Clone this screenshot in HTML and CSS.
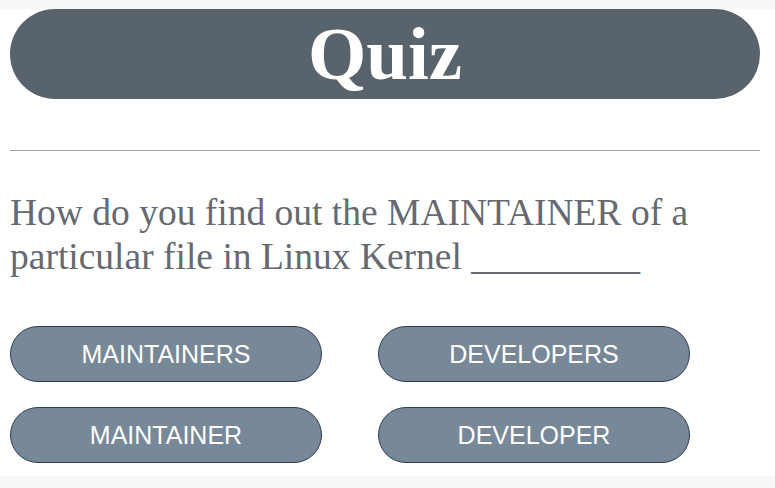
FILE: index.html
```html
<!DOCTYPE html>
<html lang="en">
<head>
<meta charset="utf-8">
<title>Quiz</title>
<link rel="stylesheet" href="styles.css">
</head>
<body>
<main class="quiz">
  <header class="quiz-header"><h1 class="quiz-title">Quiz</h1></header>
  <hr class="divider">
  <p class="question">How do you find out the MAINTAINER of a particular file in Linux Kernel _________</p>
  <div class="answers">
    <button class="answer">MAINTAINERS</button>
    <button class="answer">DEVELOPERS</button>
    <button class="answer">MAINTAINER</button>
    <button class="answer">DEVELOPER</button>
  </div>
</main>
</body>
</html>
```
FILE: styles.css
```css
html, body {
  margin: 0;
  padding: 0;
  background: #f7f8f8;
}
.quiz {
  margin-top: 9px;
  padding: 0 15px 13px 10px;
  background: #ffffff;
  font-family: "Liberation Serif", "Times New Roman", serif;
}
.quiz-header {
  width: 750px;
  height: 90px;
  border-radius: 45px;
  background: #59636c;
  display: flex;
  align-items: center;
  justify-content: center;
}
.quiz-title {
  margin: 0;
  color: #ffffff;
  font-size: 75px;
  font-weight: bold;
  line-height: 1;
  position: relative;
  top: -1px;
}
.divider {
  width: 750px;
  margin: 51px 0 0 0;
  border: 0;
  border-top: 1px solid #a6a6a6;
  height: 0;
}
.question {
  margin: 40px 0 0 0;
  font-size: 37.5px;
  line-height: 44px;
  color: #666a70;
}
.answers {
  margin-top: 47px;
  display: grid;
  grid-template-columns: 312px 312px;
  column-gap: 56px;
  row-gap: 25px;
}
.answer {
  height: 56px;
  border: 1px solid #2b3e57;
  border-radius: 28px;
  background: #778899;
  color: #ffffff;
  font-family: "Liberation Sans", Arial, sans-serif;
  font-size: 25px;
  padding: 0;
}
```
